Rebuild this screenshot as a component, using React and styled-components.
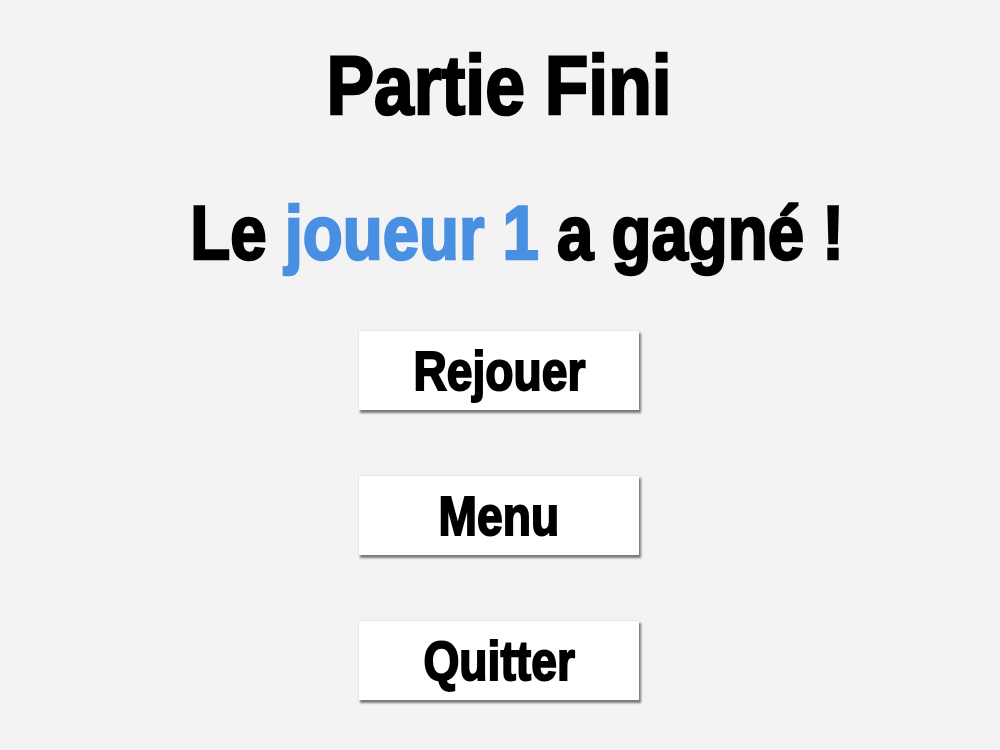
import styled, { createGlobalStyle } from "styled-components";

const GlobalStyle = createGlobalStyle`
  html, body {
    margin: 0;
    padding: 0;
    background: #f3f3f3;
  }
  body {
    font-family: "Liberation Sans", Arial, sans-serif;
    font-weight: 700;
  }
`;

const Screen = styled.div`
  width: 1000px;
  height: 750px;
  display: flex;
  flex-direction: column;
  align-items: center;
  background: #f3f3f3;
`;

// the original uses a condensed black face, so squeeze the text horizontally
const Condensed = styled.span`
  display: inline-block;
  transform: scaleX(${(p) => p.$scale || 0.85});
  -webkit-text-stroke: ${(p) => p.$stroke || "2.5px"} currentColor;
  white-space: nowrap;
`;

const Title = styled.h1`
  margin: 35px 0 0 -1px;
  font-size: 84px;
  line-height: 100px;
  font-weight: 700;
  color: #000;
`;

const Result = styled.h2`
  margin: 53px 0 0 34px;
  font-size: 76px;
  line-height: 90px;
  font-weight: 700;
  color: #000;
`;

const Player = styled.span`
  color: #4a90e2;
`;

const Buttons = styled.div`
  display: flex;
  flex-direction: column;
  gap: 65px;
  margin: 52px 0 0 -3px;
`;

const Button = styled.button`
  box-sizing: border-box;
  width: 281px;
  height: 80px;
  padding: 0;
  background: #fff;
  border: 1px solid #e6e6e6;
  border-right: none;
  border-bottom: none;
  box-shadow: 2px 3px 2px rgba(0, 0, 0, 0.5);
  font-family: inherit;
  font-size: 55px;
  font-weight: 700;
  color: #000;
  cursor: pointer;
`;

export default function App() {
  return (
    <Screen>
      <GlobalStyle />
      <Title>
        <Condensed>Partie Fini</Condensed>
      </Title>
      <Result>
        <Condensed $scale={0.86}>
          Le <Player>joueur 1</Player> a gagné !
        </Condensed>
      </Result>
      <Buttons>
        <Button>
          <Condensed $scale={0.84} $stroke="2px">Rejouer</Condensed>
        </Button>
        <Button>
          <Condensed $scale={0.84} $stroke="2px">Menu</Condensed>
        </Button>
        <Button>
          <Condensed $scale={0.84} $stroke="2px">Quitter</Condensed>
        </Button>
      </Buttons>
    </Screen>
  );
}
